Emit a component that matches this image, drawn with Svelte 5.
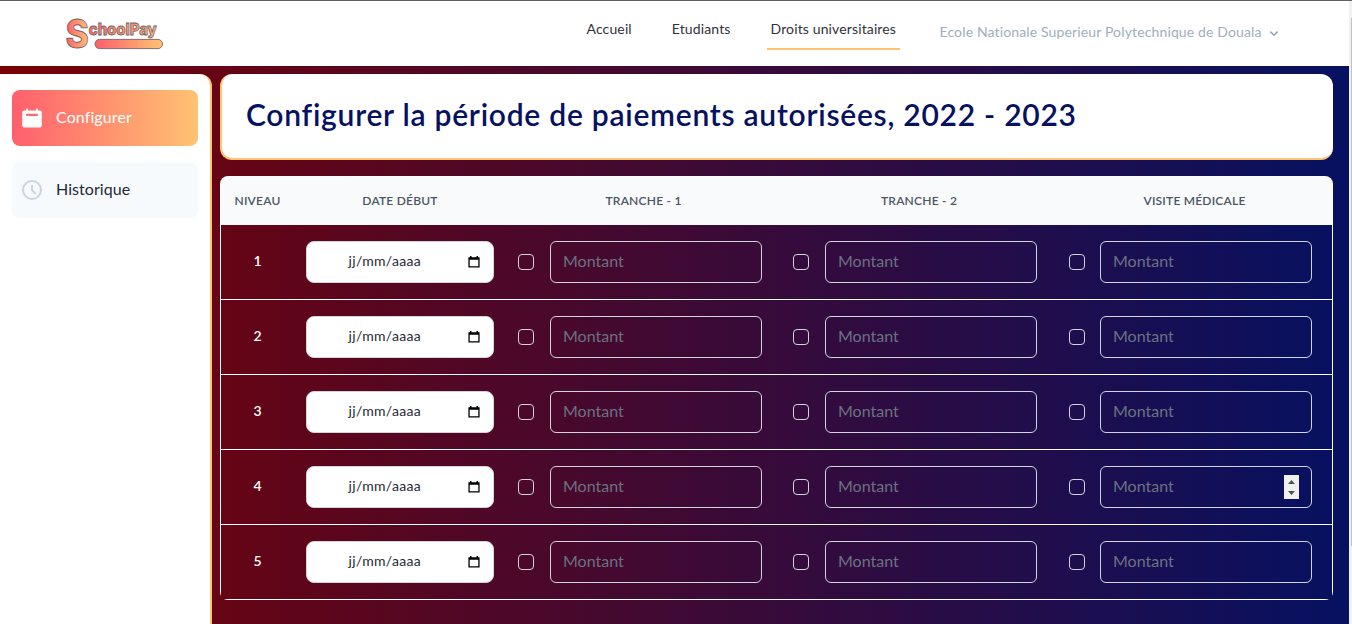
<script>
  const levels = [1, 2, 3, 4, 5];
  const tranches = ['t1', 't2', 'vm'];
</script>

<div class="page">
  <header>
    <svg class="logo" width="100" height="50" viewBox="0 -7 100 50" aria-label="SchoolPay">
      <defs>
        <linearGradient id="warm" x1="0" x2="1" y1="0" y2="0">
          <stop offset="0" stop-color="#ff5f6d" />
          <stop offset="1" stop-color="#ffc371" />
        </linearGradient>
        <linearGradient id="warmText" gradientUnits="userSpaceOnUse" x1="20" x2="94" y1="0" y2="0">
          <stop offset="0" stop-color="#ff6f6d" />
          <stop offset="1" stop-color="#ffb771" />
        </linearGradient>
      </defs>
      <text class="big" transform="translate(-0.4 32) scale(0.88 1)" x="0" y="0" fill="url(#warm)">S</text>
      <text class="small" x="22.8" y="18.8" textLength="68" lengthAdjust="spacingAndGlyphs" fill="url(#warmText)">choolPay</text>
      <rect x="29" y="23.4" width="67.5" height="9.2" rx="4.6" fill="url(#warm)" stroke="#746267" stroke-width="0.9" />
    </svg>
    <nav>
      <a href="#accueil">Accueil</a>
      <a href="#etudiants">Etudiants</a>
      <a href="#droits" class="active">Droits universitaires</a>
    </nav>
    <button class="account">
      <span>Ecole Nationale Superieur Polytechnique de Douala</span>
      <svg width="10" height="7" viewBox="0 0 10 7"><path d="M1.3 1.6l3.7 3.6 3.7-3.6" fill="none" stroke="#94a3b8" stroke-width="1.6" /></svg>
    </button>
  </header>

  <div class="body">
    <aside>
      <a href="#configurer" class="item on">
        <svg width="20" height="20" viewBox="0 0 20 20" fill="#fff">
          <path fill-rule="evenodd" d="M4 1.4a1 1 0 0 1 2 0V2.4h8V1.4a1 1 0 0 1 2 0V2.4h1.8a2 2 0 0 1 2 2v13a2 2 0 0 1-2 2H2.2a2 2 0 0 1-2-2v-13a2 2 0 0 1 2-2H4zM4.9 5.7a1.1 1.1 0 0 0 0 2.2h10.2a1.1 1.1 0 0 0 0-2.2z" />
        </svg>
        <span>Configurer</span>
      </a>
      <a href="#historique" class="item">
        <svg width="20" height="20" viewBox="0 0 20 20" fill="none" stroke="#cbd5e1" stroke-width="2">
          <circle cx="10" cy="10" r="9" />
          <path d="M10 5v5l3.6 4" />
        </svg>
        <span>Historique</span>
      </a>
    </aside>

    <main>
      <section class="title"><h1>Configurer la période de paiements autorisées, 2022 - 2023</h1></section>

      <section class="clip">
        <div class="table">
          <div class="row head">
            <span>NIVEAU</span><span>DATE DÉBUT</span><span>TRANCHE - 1</span><span>TRANCHE - 2</span><span>VISITE MÉDICALE</span>
          </div>
          {#each levels as n}
            <div class="row">
              <span class="level">{n}</span>
              <div class="cell">
                <div class="date">
                  <span>jj/mm/aaaa</span>
                  <svg width="12" height="12" viewBox="0 0 12 12">
                    <path d="M2 0h1.5v1.2h5V0H10v1.2h1.6V11.6H.4V1.2H2zM1.7 3.8v6.5h8.6V3.8z" fill="#000" fill-rule="evenodd" />
                  </svg>
                </div>
              </div>
              {#each tranches as t}
                <div class="cell pay {t}">
                  <input type="checkbox" />
                  <div class="amount">
                    <span>Montant</span>
                    {#if n === 4 && t === 'vm'}
                      <svg width="15" height="24" viewBox="0 0 15 24">
                        <rect width="15" height="24" fill="#f0f0f0" />
                        <path d="M4 9l3.5-4L11 9zM4 16h7l-3.5 4z" fill="#505050" />
                      </svg>
                    {/if}
                  </div>
                </div>
              {/each}
            </div>
          {/each}
        </div>
      </section>
    </main>
  </div>
</div>
<div class="scroll"><i></i></div>

<style>
  :global(body) { overflow: hidden; background: #fff; }
  :global(#app) { display: flex; }
  .page, .page * { box-sizing: border-box; }
  .page {
    width: 1349px; height: 624px; display: flex; flex-direction: column; overflow: hidden;
    font-family: Lato, "Open Sans", sans-serif;
    background: linear-gradient(90deg, #780206, #061161);
  }
  a { text-decoration: none; color: inherit; }
  header {
    height: 66px; flex: none; background: #fff; border-top: 1px solid #5f5f66;
    display: flex; align-items: flex-start; padding-left: 66px;
  }
  .logo { margin-top: 8px; flex: none; overflow: visible; }
  .logo text { stroke: #746267; }
  .big { font-family: Inter, "Liberation Sans", sans-serif; font-weight: 800; font-size: 40px; stroke-width: 0.9; }
  .small { font-family: Inter, "Liberation Sans", sans-serif; font-weight: 800; font-size: 15.5px; stroke-width: 0.8; }
  nav { display: flex; margin-left: 416.5px; gap: 32px; }
  nav a {
    height: 49px; padding: 18px 4px 0; font-size: 14px; line-height: 20px; letter-spacing: 0.13px;
    color: #32323a; border-bottom: 2px solid transparent; white-space: nowrap;
  }
  nav a.active { border-color: #ffc371; }
  .account {
    border: 0; background: none; padding: 0; margin: 21px 0 0 39.5px; display: flex; align-items: center; gap: 7px;
    font: 14px/20px Lato, sans-serif; letter-spacing: 0.14px; color: #a0aec0; white-space: nowrap;
  }
  .account svg { margin-top: 2px; }
  .body { flex: 1; display: flex; padding-top: 8px; gap: 8px; min-height: 0; }
  aside {
    width: 212px; background: #fff; border-right: 2px solid #ffc371; border-top-right-radius: 12px;
    padding: 16px 12px; display: flex; flex-direction: column; gap: 16px;
  }
  .item {
    height: 56px; border-radius: 8px; background: #f7fafd; display: flex; align-items: center;
    gap: 14px; padding-left: 10px; font-size: 16px; letter-spacing: 0.05px; color: #1f2937;
  }
  .item span, .date span, .amount span { padding-bottom: 3px; }
  .item.on { background: linear-gradient(90deg, #ff5f6d, #ffc371); color: #fff; letter-spacing: 0.1px; }
  main { width: 1113px; display: flex; flex-direction: column; gap: 16px; }
  .title {
    height: 86px; background: #fff; border-left: 2px solid #ffc371; border-bottom: 2px solid #ffc371;
    border-radius: 12px; padding: 21px 24px 0;
  }
  h1 { margin: 0; font-size: 30px; line-height: 38px; font-weight: 600; letter-spacing: 0.74px; color: #061161; white-space: nowrap; }
  .clip { height: 424px; border-radius: 8px; overflow: hidden; flex: none; }
  .table { border: 1px solid #fff; border-top: 0; border-bottom: 0; }
  .row {
    height: 75px; display: grid; grid-template-columns: 73px 212px 275px 276px 275px; align-items: center;
    border-bottom: 1px solid #fff;
  }
  .head {
    height: 49px; background: #f8fafc; border: 0; text-align: center; font-size: 12px; font-weight: 600;
    color: #4b5563; letter-spacing: 0.22px;
  }
  .level { text-align: center; color: #fff; font-size: 14px; font-weight: 600; padding-bottom: 3px; }
  .cell { padding: 0 12px; }
  .date {
    height: 42px; width: 188px; border: 1px solid #d1d5db; border-radius: 8px; background: #fff;
    display: flex; align-items: center; justify-content: space-between; padding: 0 13px 0 41.5px;
    font-size: 14px; letter-spacing: 0.33px; color: #1f2937;
  }
  .pay { display: flex; align-items: center; gap: 16px; }
  .pay.vm { gap: 15px; }
  .pay input {
    appearance: none; width: 16px; height: 16px; margin: 0; border: 1px solid #d1d5db; border-radius: 4px; flex: none;
  }
  .amount {
    width: 212px; height: 42px; flex: none; border: 1px solid #d1d5db; border-radius: 6px; padding: 0 12px;
    display: flex; align-items: center; justify-content: space-between; font-size: 16px; color: #6b7280;
  }
  .scroll { width: 3px; height: 624px; background: #f1f1f1; border-top: 1px solid #5f5f66; box-sizing: border-box; padding: 17px 0 0 2px; }
  .scroll i { display: block; height: 528px; background: #c1c1c1; }
</style>
